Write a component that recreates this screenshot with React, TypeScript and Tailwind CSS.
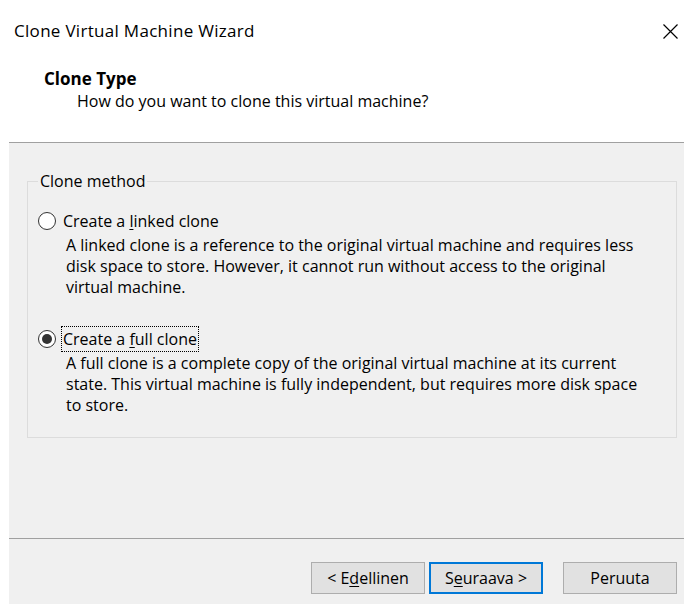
import React, { useState } from 'react';

type CloneMode = 'linked' | 'full';

const Radio = ({ checked }: { checked: boolean }) => (
  <span className="flex h-[18px] w-[18px] shrink-0 items-center justify-center rounded-full border border-[#333333] bg-white">
    {checked && <span className="h-[10px] w-[10px] rounded-full bg-[#333333]" />}
  </span>
);

const WizardButton = ({
  children,
  primary = false,
}: {
  children: React.ReactNode;
  primary?: boolean;
}) => (
  <button
    className={
      primary
        ? 'flex h-[32px] w-[114px] items-center justify-center border-2 border-[#0078d7] bg-[#e1e1e1] text-[16px] text-black'
        : 'flex h-[32px] w-[114px] items-center justify-center border border-[#adadad] bg-[#e1e1e1] text-[16px] text-black'
    }
  >
    {children}
  </button>
);

export default function App() {
  const [mode, setMode] = useState<CloneMode>('full');

  return (
    <div className="flex h-[604px] w-[684px] flex-col bg-white font-['Open_Sans',sans-serif] text-black">
      {/* Header */}
      <div className="h-[142px] pl-[14px]">
        <div className="flex h-[62px] items-center justify-between pr-[6px]">
          <span className="text-[17px] tracking-[0.3px]">Clone Virtual Machine Wizard</span>
          <svg width="15" height="15" viewBox="0 0 15 15" className="text-black">
            <path d="M0.5 0.5 L14.5 14.5 M14.5 0.5 L0.5 14.5" stroke="currentColor" strokeWidth="1.2" />
          </svg>
        </div>
        <div className="mt-[6px] pl-[30px] text-[16px] leading-[22px]">
          <p className="text-[17px] font-bold">Clone Type</p>
          <p className="pl-[33px]">How do you want to clone this virtual machine?</p>
        </div>
      </div>

      <div className="ml-[9px] flex flex-1 flex-col border-t border-[#a0a0a0] bg-[#f0f0f0]">
        {/* Content */}
        <div className="flex-1 pt-[28px] pl-[18px] pr-[7px]">
          <fieldset className="border border-[#dcdcdc] pl-[10px] pt-[18px] pb-[21px] text-[16px]">
            <legend className="px-[2px] leading-[21px]">Clone method</legend>

            <label className="flex h-[22px] items-center" onClick={() => setMode('linked')}>
              <Radio checked={mode === 'linked'} />
              <span className="ml-[5px] px-[1px] border border-transparent">
                Create a <span className="underline underline-offset-2">l</span>inked clone
              </span>
            </label>
            <p className="mt-[3px] pl-[28px] leading-[21px]">
              A linked clone is a reference to the original virtual machine and requires less
              <br />
              disk space to store. However, it cannot run without access to the original
              <br />
              virtual machine.
            </p>

            <label className="mt-[30px] flex h-[22px] items-center" onClick={() => setMode('full')}>
              <Radio checked={mode === 'full'} />
              <span
                className={
                  mode === 'full'
                    ? 'ml-[5px] border border-dotted border-black px-[1px]'
                    : 'ml-[5px] border border-transparent px-[1px]'
                }
              >
                Create a <span className="underline underline-offset-2">f</span>ull clone
              </span>
            </label>
            <p className="mt-[3px] pl-[28px] leading-[21px]">
              A full clone is a complete copy of the original virtual machine at its current
              <br />
              state. This virtual machine is fully independent, but requires more disk space
              <br />
              to store.
            </p>
          </fieldset>
        </div>

        {/* Footer */}
        <div className="flex h-[66px] justify-end gap-[4px] border-t border-[#a0a0a0] pt-[23px] pr-[7px]">
          <WizardButton>
            &lt; E<span className="underline underline-offset-2">d</span>ellinen
          </WizardButton>
          <WizardButton primary>
            S<span className="underline underline-offset-2">e</span>uraava &gt;
          </WizardButton>
          <div className="ml-[16px]">
            <WizardButton>Peruuta</WizardButton>
          </div>
        </div>
      </div>
    </div>
  );
}
